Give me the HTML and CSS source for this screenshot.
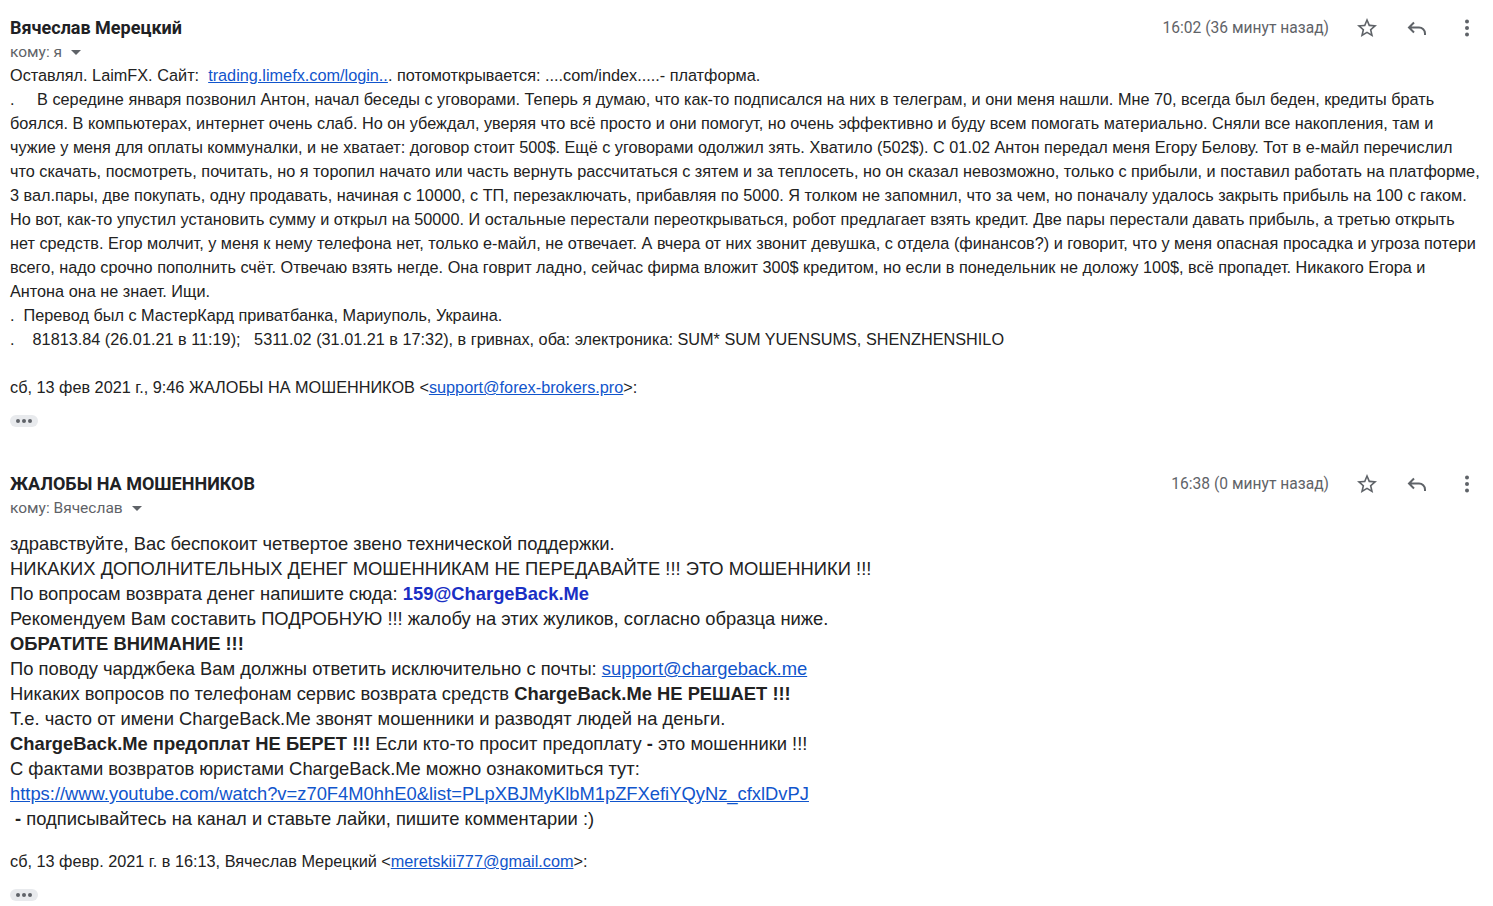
FILE: index.html
```html
<!DOCTYPE html>
<html lang="ru">
<head>
<meta charset="utf-8">
<link rel="stylesheet" href="styles.css">
</head>
<body>
<div class="thread">
  <section class="msg msg-first">
    <header class="msg-head">
      <div class="who">
        <div class="sender">Вячеслав Мерецкий</div>
        <div class="to">кому: я <span class="caret"></span></div>
      </div>
      <div class="meta">
        <span class="time">16:02 (36 минут назад)</span>
        <span class="icon star"><svg viewBox="0 0 24 24" width="24" height="24"><path d="M22 9.24l-7.19-.62L12 2 9.19 8.63 2 9.24l5.46 4.730L5.82 21 12 17.27 18.18 21l-1.63-7.03L22 9.24zM12 15.4l-3.76 2.27 1-4.28-3.32-2.88 4.38-.38L12 6.1l1.71 4.04 4.38.38-3.32 2.88 1 4.28L12 15.4z" fill="#5f6368"/></svg></span>
        <span class="icon reply"><svg viewBox="0 0 24 24" width="24" height="24"><path d="M9 6.5L4 11.5l5 5M4 11.5h10a6 6 0 0 1 6 6v1.5" fill="none" stroke="#5f6368" stroke-width="2"/></svg></span>
        <span class="icon more"><svg viewBox="0 0 24 24" width="24" height="24"><circle cx="12" cy="5.5" r="2" fill="#5f6368"/><circle cx="12" cy="12" r="2" fill="#5f6368"/><circle cx="12" cy="18.5" r="2" fill="#5f6368"/></svg></span>
      </div>
    </header>
    <div class="body body-small">
      <div class="line">Оставлял. LaimFX. Сайт:&nbsp; <a href="#">trading.limefx.com/login..</a>. потомоткрывается: ....com/index.....- платформа.</div>
      <div class="line">.&nbsp;&nbsp;&nbsp;&nbsp; В середине января позвонил Антон, начал беседы с уговорами. Теперь я думаю, что как-то подписался на них в телеграм, и они меня нашли. Мне 70, всегда был беден, кредиты брать</div>
      <div class="line">боялся. В компьютерах, интернет очень слаб. Но он убеждал, уверяя что всё просто и они помогут, но очень эффективно и буду всем помогать материально. Сняли все накопления, там и</div>
      <div class="line">чужие у меня для оплаты коммуналки, и не хватает: договор стоит 500$. Ещё с уговорами одолжил зять. Хватило (502$). С 01.02 Антон передал меня Егору Белову. Тот в е-майл перечислил</div>
      <div class="line">что скачать, посмотреть, почитать, но я торопил начато или часть вернуть рассчитаться с зятем и за теплосеть, но он сказал невозможно, только с прибыли, и поставил работать на платформе,</div>
      <div class="line">3 вал.пары, две покупать, одну продавать, начиная с 10000, с ТП, перезаключать, прибавляя по 5000. Я толком не запомнил, что за чем, но поначалу удалось закрыть прибыль на 100 с гаком.</div>
      <div class="line">Но вот, как-то упустил установить сумму и открыл на 50000. И остальные перестали переоткрываться, робот предлагает взять кредит. Две пары перестали давать прибыль, а третью открыть</div>
      <div class="line">нет средств. Егор молчит, у меня к нему телефона нет, только е-майл, не отвечает. А вчера от них звонит девушка, с отдела (финансов?) и говорит, что у меня опасная просадка и угроза потери</div>
      <div class="line">всего, надо срочно пополнить счёт. Отвечаю взять негде. Она говрит ладно, сейчас фирма вложит 300$ кредитом, но если в понедельник не доложу 100$, всё пропадет. Никакого Егора и</div>
      <div class="line">Антона она не знает. Ищи.</div>
      <div class="line">.&nbsp; Перевод был с МастерКард приватбанка, Мариуполь, Украина.</div>
      <div class="line">.&nbsp;&nbsp;&nbsp; 81813.84 (26.01.21 в 11:19);&nbsp;&nbsp; 5311.02 (31.01.21 в 17:32), в гривнах, оба: электроника: SUM* SUM YUENSUMS, SHENZHENSHILO</div>
    </div>
    <div class="quote-line">сб, 13 фев 2021 г., 9:46 ЖАЛОБЫ НА МОШЕННИКОВ &lt;<a href="#">support@forex-brokers.pro</a>&gt;:</div>
    <div class="expand"><span class="dot"></span><span class="dot"></span><span class="dot"></span></div>
  </section>

  <section class="msg msg-second">
    <header class="msg-head">
      <div class="who">
        <div class="sender">ЖАЛОБЫ НА МОШЕННИКОВ</div>
        <div class="to">кому: Вячеслав <span class="caret"></span></div>
      </div>
      <div class="meta">
        <span class="time">16:38 (0 минут назад)</span>
        <span class="icon star"><svg viewBox="0 0 24 24" width="24" height="24"><path d="M22 9.24l-7.19-.62L12 2 9.19 8.63 2 9.24l5.46 4.73L5.82 21 12 17.27 18.18 21l-1.63-7.03L22 9.24zM12 15.4l-3.76 2.27 1-4.28-3.32-2.88 4.38-.38L12 6.1l1.71 4.04 4.38.38-3.32 2.88 1 4.28L12 15.4z" fill="#5f6368"/></svg></span>
        <span class="icon reply"><svg viewBox="0 0 24 24" width="24" height="24"><path d="M9 6.5L4 11.5l5 5M4 11.5h10a6 6 0 0 1 6 6v1.5" fill="none" stroke="#5f6368" stroke-width="2"/></svg></span>
        <span class="icon more"><svg viewBox="0 0 24 24" width="24" height="24"><circle cx="12" cy="5.5" r="2" fill="#5f6368"/><circle cx="12" cy="12" r="2" fill="#5f6368"/><circle cx="12" cy="18.5" r="2" fill="#5f6368"/></svg></span>
      </div>
    </header>
    <div class="body body-large">
      <div class="line">здравствуйте, Вас беспокоит четвертое звено технической поддержки.</div>
      <div class="line">НИКАКИХ ДОПОЛНИТЕЛЬНЫХ ДЕНЕГ МОШЕННИКАМ НЕ ПЕРЕДАВАЙТЕ !!! ЭТО МОШЕННИКИ !!!</div>
      <div class="line">По вопросам возврата денег напишите сюда: <b class="accent">159@ChargeBack.Me</b></div>
      <div class="line">Рекомендуем Вам составить ПОДРОБНУЮ !!! жалобу на этих жуликов, согласно образца ниже.</div>
      <div class="line"><b>ОБРАТИТЕ ВНИМАНИЕ !!!</b></div>
      <div class="line">По поводу чарджбека Вам должны ответить исключительно с почты: <a href="#">support@chargeback.me</a></div>
      <div class="line">Никаких вопросов по телефонам сервис возврата средств <b>ChargeBack.Me НЕ РЕШАЕТ !!!</b></div>
      <div class="line">Т.е. часто от имени ChargeBack.Me звонят мошенники и разводят людей на деньги.</div>
      <div class="line"><b>ChargeBack.Me предоплат НЕ БЕРЕТ !!!</b> Если кто-то просит предоплату <b>-</b> это мошенники !!!</div>
      <div class="line">С фактами возвратов юристами ChargeBack.Me можно ознакомиться тут:</div>
      <div class="line"><a href="#">https://www.youtube.com/watch?v=z70F4M0hhE0&amp;list=PLpXBJMyKlbM1pZFXefiYQyNz_cfxlDvPJ</a></div>
      <div class="line">&nbsp;<b>-</b> подписывайтесь на канал и ставьте лайки, пишите комментарии :)</div>
    </div>
    <div class="quote-line quote-line-2">сб, 13 февр. 2021 г. в 16:13, Вячеслав Мерецкий &lt;<a href="#">meretskii777@gmail.com</a>&gt;:</div>
    <div class="expand"><span class="dot"></span><span class="dot"></span><span class="dot"></span></div>
  </section>
</div>
</body>
</html>
```
FILE: styles.css
```css
* { box-sizing: border-box; }
html, body { margin: 0; padding: 0; background: #ffffff; }
body {
  font-family: "Liberation Sans", Arial, sans-serif;
  color: #222222;
  width: 1493px;
  height: 906px;
  overflow: hidden;
}
.thread { padding: 0 10px; }
.msg-head {
  display: flex;
  justify-content: space-between;
  align-items: flex-start;
}
.who { display: flex; flex-direction: column; }
.sender {
  font-family: Roboto, "Liberation Sans", sans-serif;
  font-weight: 700;
  font-size: 18px;
  color: #202124;
  line-height: 24px;
}
.to {
  font-family: Roboto, "Liberation Sans", sans-serif;
  font-size: 15.5px;
  color: #5f6368;
  line-height: 25px;
  display: flex;
  align-items: center;
  gap: 6px;
}
.caret {
  width: 0; height: 0;
  border-left: 5px solid transparent;
  border-right: 5px solid transparent;
  border-top: 5px solid #5f6368;
  margin-left: 3px;
}
.meta {
  display: flex;
  align-items: center;
}
.time {
  font-family: Roboto, "Liberation Sans", sans-serif;
  font-size: 15.6px;
  color: #5f6368;
  margin-right: 13px;
}
.icon {
  width: 50px;
  height: 24px;
  display: flex;
  align-items: center;
  justify-content: center;
}
.icon svg { width: 24px; height: 24px; }
.icon.more { margin-right: -9px; }
.msg-first { padding-top: 16px; }
.msg-first .msg-head { height: 47px; }
.body a, .quote-line a { color: #1155cc; text-decoration: underline; }
.body-small { font-size: 16.25px; line-height: 24px; }
.body-large { font-size: 18.36px; line-height: 25px; }
.accent { color: #1a2fc4; }
.quote-line {
  font-size: 16.25px;
  line-height: 24px;
  color: #222222;
  margin-top: 24px;
}
.expand {
  margin-top: 16px;
  width: 28px;
  height: 12px;
  border-radius: 6px;
  background: #e8eaed;
  display: flex;
  align-items: center;
  justify-content: center;
  gap: 2px;
}
.dot { width: 4px; height: 4px; border-radius: 50%; background: #5f6368; }
.msg-second { padding-top: 45px; }
.msg-second .msg-head { height: 59px; }
.quote-line-2 { margin-top: 18px; }
```
